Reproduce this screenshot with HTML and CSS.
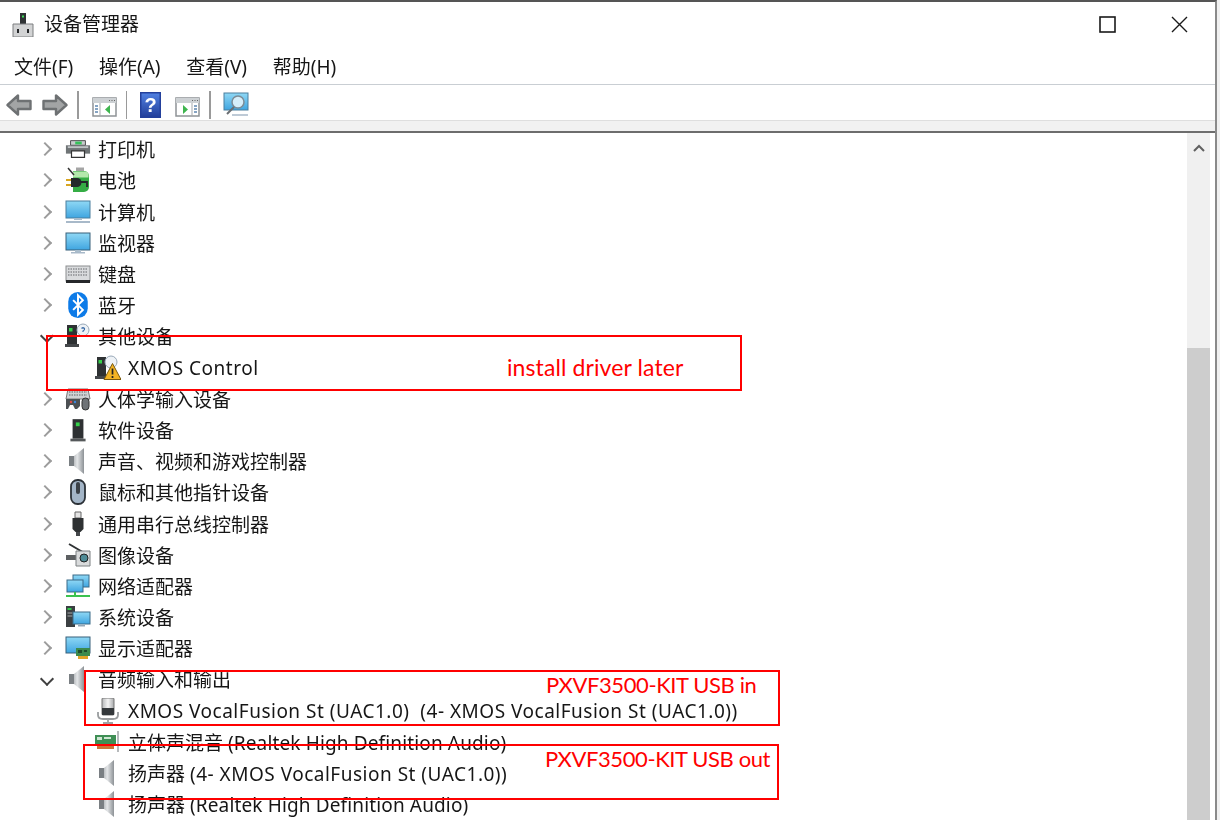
FILE: index.html
```html
<!DOCTYPE html>
<html>
<head>
  <meta charset="utf-8">
  <title>设备管理器</title>
  <link rel="stylesheet" href="styles.css">
</head>
<body>
  <svg class="defs" width="0" height="0">
    <defs>
      <linearGradient id="screen" x1="0" y1="0" x2="0" y2="1"><stop offset="0" stop-color="#8fd8f5"/><stop offset="1" stop-color="#3fa5e0"/></linearGradient>
      <linearGradient id="speaker" x1="0" y1="0" x2="1" y2="0"><stop offset="0" stop-color="#7b8084"/><stop offset="0.55" stop-color="#e4e6e8"/><stop offset="1" stop-color="#8d9296"/></linearGradient>
      <linearGradient id="mic" x1="0" y1="0" x2="1" y2="0"><stop offset="0" stop-color="#b5b7b9"/><stop offset="0.5" stop-color="#f4f4f4"/><stop offset="1" stop-color="#a8aaac"/></linearGradient>
      <linearGradient id="helpfill" x1="0" y1="0" x2="0" y2="1"><stop offset="0" stop-color="#4f7fe0"/><stop offset="1" stop-color="#23409c"/></linearGradient>
      <symbol id="i-tower" viewBox="0 0 24 24"><path d="M7 2h10v18H7z" fill="#2e3133"/><rect x="10" y="5" width="3.500" height="3.500" fill="#35d04a"/><path d="M5 20h14v2.500H5z" fill="#55585a"/></symbol>
      <symbol id="i-printer" viewBox="0 0 28 24"><path d="M6 3h16v5H6z" fill="#c8ccce" stroke="#444"/><path d="M11 4h7v3h-7z" fill="#36c35a"/><path d="M1 8h26v9H1z" fill="#6f7476"/><path d="M3 9h22v2H3z" fill="#c0c4c6"/><path d="M7 14h14v7H7z" fill="#fff" stroke="#333" stroke-width="1.300"/></symbol>
      <symbol id="i-battery" viewBox="0 0 26 26"><path d="M8 4h11a5 5 0 0 1 5 5v11a5 5 0 0 1-5 5H8z" fill="#35ad45"/><path d="M11 0.500h8v3.500h-8z" fill="#a5a5a5"/><path d="M8 4.500h13a3 3 0 0 1 2.500 3v3H8z" fill="#b4e8ac"/><path d="M3 1l6 7" stroke="#333" stroke-width="1.500"/><path d="M6 11h6a4.500 4.500 0 0 1 0 9H6z" fill="#24292b"/><path d="M1 13h5M1 18h5" stroke="#d8a520" stroke-width="2"/><path d="M16 15h6v5" fill="none" stroke="#24292b" stroke-width="1.800"/></symbol>
      <symbol id="i-pc" viewBox="0 0 26 24"><rect x="1" y="1" width="24" height="17" fill="url(#screen)" stroke="#4a7f9e"/><path d="M9 18h8v2H9z" fill="#a9bccb"/><path d="M1 21h24v2H1z" fill="#a8b9c9"/></symbol>
      <symbol id="i-monitor" viewBox="0 0 26 24"><rect x="1" y="2" width="24" height="17" fill="url(#screen)" stroke="#38617a"/><path d="M10 19h6v2h-6z" fill="#a9bccb"/><path d="M6 21h14v1.500H6z" fill="#a8b9c9"/></symbol>
      <symbol id="i-keyboard" viewBox="0 0 26 24"><rect x="1" y="4" width="24" height="15" fill="#d9dbdd" stroke="#8b8e90"/><path d="M3 7h20M3 10h20M3 13h20" stroke="#8a8d90" stroke-width="1.500" stroke-dasharray="1.500 1"/><path d="M1 18h24v3H1z" fill="#26282a"/></symbol>
      <symbol id="i-bluetooth" viewBox="0 0 24 24"><rect x="3" y="0" width="18" height="24" rx="9" fill="#0d7be8"/><path d="M7.500 7.500l9 9-4.500 4.500V3l4.500 4.500-9 9" fill="none" stroke="#fff" stroke-width="1.800"/></symbol>
      <symbol id="i-unknown" viewBox="0 0 26 24"><path d="M2 1h10v19H2z" fill="#2e3133"/><rect x="4" y="4" width="3.500" height="3.500" fill="#35d04a"/><path d="M0 20h14v3H0z" fill="#44474a"/><circle cx="18" cy="6" r="6" fill="#eef2f6" stroke="#98a8b8"/><path d="M16.500 4.500q1.500-1.500 3 0q.5 1.500-1.500 2.500v1" fill="none" stroke="#3f6ea8" stroke-width="1.200"/></symbol>
      <symbol id="i-warn" viewBox="0 0 26 24"><path d="M2 1h9v19H2z" fill="#2e3133"/><rect x="3.500" y="4" width="3.500" height="3.500" fill="#35d04a"/><path d="M0 20h11v3H0z" fill="#44474a"/><circle cx="16" cy="6" r="6" fill="#eef2f6" stroke="#98a8b8"/><path d="M17.500 7.500l8.500 16H9z" fill="#f3b324" stroke="#7a5a10"/><path d="M17.500 12.500v6M17.500 20v2" stroke="#222" stroke-width="1.700"/></symbol>
      <symbol id="i-hid" viewBox="0 0 26 24"><path d="M3 2h20l2 10H1z" fill="#cfd2d4" stroke="#777"/><path d="M4 5h18M4 8h18" stroke="#85888a" stroke-dasharray="1.500 1" stroke-width="1.500"/><path d="M1 12h14v7l-3 3h-2l-2-4H5l-2 4H1z" fill="#4c5053"/><circle cx="6" cy="15" r="1.200" fill="#e04848"/><circle cx="10" cy="15" r="1.200" fill="#3b86e0"/><rect x="17" y="11" width="7" height="12" rx="3.500" fill="#6f7377" stroke="#333"/></symbol>
      <symbol id="i-speaker" viewBox="0 0 24 26"><path d="M3 8h5l10-8v26l-10-8H3z" fill="url(#speaker)"/><path d="M3 8h5v10H3z" fill="#7a7f83"/></symbol>
      <symbol id="i-mouse" viewBox="0 0 24 26"><rect x="5" y="1" width="14" height="24" rx="6.500" fill="#a3b5c7" stroke="#2c3238" stroke-width="1.800"/><rect x="10" y="3" width="4" height="12" rx="2" fill="#3a4046"/></symbol>
      <symbol id="i-usb" viewBox="0 0 24 26"><path d="M9 1h6v6H9z" fill="#e4e4e4" stroke="#666"/><path d="M6.500 7h11v11l-3 3h-5l-3-3z" fill="#2e3133"/><path d="M10 21h4v4h-4z" fill="#44474a"/></symbol>
      <symbol id="i-camera" viewBox="0 0 26 24"><path d="M4 1l17 10" stroke="#2f3234" stroke-width="2"/><path d="M1 12h10v5H1z" fill="#5d6062"/><path d="M11 8h14v15H11z" fill="#d9dbdc" stroke="#7d8082"/><circle cx="19" cy="15" r="4" fill="#4f8b96" stroke="#222"/></symbol>
      <symbol id="i-net" viewBox="0 0 26 24"><rect x="8" y="1" width="16" height="12" fill="url(#screen)" stroke="#3b6b88"/><rect x="2" y="6" width="16" height="12" fill="url(#screen)" stroke="#3b6b88"/><path d="M10 18v3M1 22h24" stroke="#3cc24f" stroke-width="2"/></symbol>
      <symbol id="i-system" viewBox="0 0 26 24"><path d="M1 1h9v21H1z" fill="#3b3f42"/><rect x="2.500" y="3" width="4" height="2" fill="#34c94c"/><path d="M2.500 8h5M2.500 11h5" stroke="#a5a8aa"/><rect x="8" y="7" width="17" height="12" fill="url(#screen)" stroke="#3b6b88"/><path d="M13 20h7v1.500h-7z" fill="#97a8b6"/></symbol>
      <symbol id="i-display" viewBox="0 0 26 24"><rect x="1" y="1" width="24" height="16" fill="url(#screen)" stroke="#38617a"/><path d="M11 12h14v8H11z" fill="#3c8a4c"/><path d="M13 14h4v3h-4zM19 14h3v2h-3z" fill="#1e4d2b"/><path d="M13 20h10v3H13z" fill="#e0a428"/></symbol>
      <symbol id="i-mic" viewBox="0 0 24 26"><rect x="6" y="0" width="12" height="17" rx="1" fill="url(#mic)" stroke="#777"/><path d="M6 10h12v7H6z" fill="#34383b"/><path d="M2 14v3q0 4 5 4h10q5 0 5-4v-3" fill="none" stroke="#9a9d9f" stroke-width="1.800"/><path d="M12 21v4M7 25h10" stroke="#a0a3a5" stroke-width="1.800"/></symbol>
      <symbol id="i-card" viewBox="0 0 26 24"><path d="M0 5h21v10H0z" fill="#3f8f55"/><path d="M2 7h5v3H2zM9 7h7v2H9z" fill="#cfe6d3"/><path d="M2 15h17v4H2z" fill="#c9763a"/><path d="M23 1v21" stroke="#b7babc" stroke-width="2"/></symbol>
    </defs>
  </svg>

  <div class="window">
    <div class="titlebar">
      <svg class="app-icon" viewBox="0 0 22 24"><path d="M8 0h6v11H8z" fill="#2f3234"/><rect x="10" y="2.500" width="2" height="2" fill="#3fe05a"/><path d="M1 11h20v13H1z" fill="#d2d3d4" stroke="#7c7e80"/><path d="M5 16h2v4H5zM15 16h2v4h-2z" fill="#26282a"/></svg>
      <span class="title">设备管理器</span>
      <div class="win-btns">
        <svg class="win-btn" viewBox="0 0 17 17"><rect x="1" y="1" width="15" height="15" fill="none" stroke="#1a1a1a" stroke-width="1.600"/></svg>
        <svg class="win-btn close" viewBox="0 0 17 17"><path d="M1 1l15 15M16 1L1 16" stroke="#1a1a1a" stroke-width="1.400"/></svg>
      </div>
    </div>

    <div class="menubar">
      <span>文件(F)</span>
      <span>操作(A)</span>
      <span>查看(V)</span>
      <span>帮助(H)</span>
    </div>

    <div class="toolbar">
      <svg class="tool arrow" viewBox="0 0 26 24"><path d="M1.500 12L12 2.500V8h12.500v8H12v5.500z" fill="#a2a4a5" stroke="#6e7173" stroke-width="2.400" stroke-linejoin="round"/></svg>
      <svg class="tool arrow next" viewBox="0 0 26 24"><path d="M24.500 12L14 2.500V8H1.500v8H14v5.500z" fill="#a2a4a5" stroke="#6e7173" stroke-width="2.400" stroke-linejoin="round"/></svg>
      <i class="sep"></i>
      <svg class="tool pane" viewBox="0 0 25 20"><rect x="1" y="1" width="23" height="18" fill="#fff" stroke="#8e9396" stroke-width="1.500"/><path d="M1 1h23v5H1z" fill="#cdd1d4"/><path d="M17 3.500h1M19.500 3.500h1M22 3.500h1" stroke="#666"/><path d="M8 6v13" stroke="#a5a9ac"/><path d="M3 9h3M3 12h3M3 15h3" stroke="#5f86b0" stroke-width="1.500"/><path d="M18 8v9l-5-4.500z" fill="#3fb54f"/></svg>
      <i class="sep"></i>
      <svg class="tool help" viewBox="0 0 21 26"><rect width="21" height="26" fill="#23409c"/><rect x="1.500" y="1.500" width="18" height="23" fill="url(#helpfill)"/><text x="10.500" y="20" text-anchor="middle" class="help-mark">?</text></svg>
      <svg class="tool pane" viewBox="0 0 25 20"><rect x="1" y="1" width="23" height="18" fill="#fff" stroke="#8e9396" stroke-width="1.500"/><path d="M1 1h23v5H1z" fill="#cdd1d4"/><path d="M17 3.500h1M19.500 3.500h1M22 3.500h1" stroke="#666"/><path d="M17 6v13" stroke="#a5a9ac"/><path d="M19 9h3M19 12h3M19 15h3" stroke="#5f86b0" stroke-width="1.500"/><path d="M8 8v9l5-4.500z" fill="#3fb54f"/></svg>
      <i class="sep"></i>
      <svg class="tool scan" viewBox="0 0 26 25"><rect x="1" y="1" width="24" height="17" fill="url(#screen)" stroke="#4a7f9e"/><circle cx="15" cy="10" r="6" fill="#d5eefa" stroke="#7c8c96" stroke-width="1.500"/><path d="M11 15l-7 7" stroke="#6a6e72" stroke-width="2"/><path d="M9 23h16" stroke="#a8b9c9" stroke-width="1.500"/></svg>
    </div>

    <div class="band"></div>

    <div class="content">
      <ul class="tree">
        <li class="row"><i class="chev"></i><svg class="icon"><use href="#i-printer"/></svg><span>打印机</span></li>
        <li class="row"><i class="chev"></i><svg class="icon"><use href="#i-battery"/></svg><span>电池</span></li>
        <li class="row"><i class="chev"></i><svg class="icon"><use href="#i-pc"/></svg><span>计算机</span></li>
        <li class="row"><i class="chev"></i><svg class="icon"><use href="#i-monitor"/></svg><span>监视器</span></li>
        <li class="row"><i class="chev"></i><svg class="icon"><use href="#i-keyboard"/></svg><span>键盘</span></li>
        <li class="row"><i class="chev"></i><svg class="icon"><use href="#i-bluetooth"/></svg><span>蓝牙</span></li>
        <li class="row"><i class="chev open"></i><svg class="icon"><use href="#i-unknown"/></svg><span>其他设备</span></li>
        <li class="row child"><svg class="icon"><use href="#i-warn"/></svg><span class="xmos">XMOS Control</span></li>
        <li class="row"><i class="chev"></i><svg class="icon"><use href="#i-hid"/></svg><span>人体学输入设备</span></li>
        <li class="row"><i class="chev"></i><svg class="icon"><use href="#i-tower"/></svg><span>软件设备</span></li>
        <li class="row"><i class="chev"></i><svg class="icon"><use href="#i-speaker"/></svg><span>声音、视频和游戏控制器</span></li>
        <li class="row"><i class="chev"></i><svg class="icon"><use href="#i-mouse"/></svg><span>鼠标和其他指针设备</span></li>
        <li class="row"><i class="chev"></i><svg class="icon"><use href="#i-usb"/></svg><span>通用串行总线控制器</span></li>
        <li class="row"><i class="chev"></i><svg class="icon"><use href="#i-camera"/></svg><span>图像设备</span></li>
        <li class="row"><i class="chev"></i><svg class="icon"><use href="#i-net"/></svg><span>网络适配器</span></li>
        <li class="row"><i class="chev"></i><svg class="icon"><use href="#i-system"/></svg><span>系统设备</span></li>
        <li class="row"><i class="chev"></i><svg class="icon"><use href="#i-display"/></svg><span>显示适配器</span></li>
        <li class="row"><i class="chev open"></i><svg class="icon"><use href="#i-speaker"/></svg><span>音频输入和输出</span></li>
        <li class="row child"><svg class="icon"><use href="#i-mic"/></svg><span class="xmos">XMOS VocalFusion St (UAC1.0)&nbsp; (4- XMOS VocalFusion St (UAC1.0))</span></li>
        <li class="row child"><svg class="icon"><use href="#i-card"/></svg><span>立体声混音 <span class="realtek">(Realtek High Definition Audio)</span></span></li>
        <li class="row child"><svg class="icon"><use href="#i-speaker"/></svg><span>扬声器 <span class="xmos">(4- XMOS VocalFusion St (UAC1.0))</span></span></li>
        <li class="row child"><svg class="icon"><use href="#i-speaker"/></svg><span>扬声器 <span class="realtek">(Realtek High Definition Audio)</span></span></li>
      </ul>
      <div class="scrollbar">
        <div class="scroll-up"><svg viewBox="0 0 12 8"><path d="M1 7l5-5 5 5" fill="none" stroke="#606060" stroke-width="2"/></svg></div>
        <div class="scroll-thumb"></div>
      </div>
    </div>
  </div>

  <!-- red notes drawn over the window -->
  <div class="note box-driver"><span>install driver later</span></div>
  <div class="note box-in"><span>PXVF3500-KIT USB in</span></div>
  <div class="note box-out"><span>PXVF3500-KIT USB out</span></div>
</body>
</html>
```

FILE: styles.css
```css
html, body {
  margin: 0;
  padding: 0;
  height: 100%;
  overflow: hidden;
  background-color: #f0f0f0;
}

body {
  font-family: "Noto Sans", "Noto Sans CJK SC", sans-serif;
  color: #161616;
  font-size: 19px;
}

.defs {
  display: block;
  height: 0;
}

.window {
  width: 1217px;
  height: 820px;
  background-color: #FFFFFF;
  border-top: 2px solid #555;
  border-right: 2px solid #8a8a8a;
  box-sizing: border-box;
  display: flex;
  flex-direction: column;
  filter: blur(0.35px);
}

.titlebar {
  height: 45px;
  display: flex;
  align-items: center;
  padding-left: 12px;
  flex: none;
}

.app-icon {
  width: 22px;
  height: 24px;
}

.title {
  margin-left: 10px;
  line-height: 1;
}

.win-btns {
  margin-left: auto;
  margin-right: 27px;
  display: flex;
  gap: 55px;
}

.win-btn {
  width: 17px;
  height: 17px;
}

.menubar {
  height: 37px;
  display: flex;
  align-items: center;
  gap: 25.7px;
  padding-left: 14px;
  border-bottom: 1px solid #c9ced3;
  flex: none;
}

.toolbar {
  height: 31px;
  padding-top: 4px;
  display: flex;
  align-items: center;
  padding-left: 6px;
  flex: none;
}

.tool {
  flex: none;
}

.arrow {
  width: 26px;
  height: 24px;
}

.arrow.next {
  margin-left: 10px;
}

.sep {
  width: 1.5px;
  height: 28px;
  background-color: #9a9a9a;
  margin: 0 13px 0 9px;
}

.pane {
  width: 25px;
  height: 20px;
  margin-top: 5px;
}

.help {
  width: 21px;
  height: 26px;
  margin-right: 14px;
}

.help-mark {
  font-family: "Liberation Sans", sans-serif;
  font-size: 20px;
  font-weight: bold;
  fill: #FFFFFF;
}

.scan {
  width: 26px;
  height: 25px;
  margin-left: -1px;
}

.band {
  height: 10px;
  background-color: #f1f1f1;
  border-top: 1px solid #dedede;
  border-bottom: 2px solid #6d6d6d;
  flex: none;
}

.content {
  flex: 1;
  display: flex;
  min-height: 0;
  overflow: hidden;
}

.tree {
  flex: 1;
  list-style-type: none;
  margin: 0;
  padding: 0.7px 0 0 40px;
  min-width: 0;
}

.row {
  height: 31.2px;
  display: flex;
  align-items: center;
  white-space: nowrap;
}

.row.child {
  padding-left: 30px;
}

.row.child .icon {
  margin-left: 25px;
}

.xmos {
  letter-spacing: 0.5px;
}

.realtek {
  letter-spacing: 0.14px;
}

.chev {
  width: 8px;
  height: 8px;
  border-top: 2px solid #9c9c9c;
  border-right: 2px solid #9c9c9c;
  transform: rotate(45deg);
  margin-right: 15px;
  flex: none;
}

.chev.open {
  border-color: #404040;
  transform: translateX(2px) rotate(135deg);
}

.icon {
  width: 26px;
  height: 26px;
  margin-right: 7px;
  flex: none;
}

.scrollbar {
  width: 23px;
  margin-right: 5px;
  background-color: #f0f0f0;
  display: flex;
  flex-direction: column;
  flex: none;
}

.scroll-up {
  height: 30px;
  display: flex;
  align-items: center;
  justify-content: center;
}

.scroll-up svg {
  width: 12px;
  height: 8px;
}

.scroll-thumb {
  margin-top: 185px;
  flex: 1;
  background-color: #cdcdcd;
}

.note {
  position: absolute;
  box-sizing: border-box;
  width: 696px;
  height: 56px;
  border: 2px solid #ff0000;
  color: #ff0000;
  font-family: Lato, sans-serif;
  font-size: 22px;
  letter-spacing: -0.4px;
  line-height: 1;
}

.note span {
  position: absolute;
  white-space: nowrap;
}

.box-driver {
  left: 46px;
  top: 335px;
  font-size: 23px;
  letter-spacing: 0.1px;
}

.box-driver span {
  left: 459px;
  top: 19px;
}

.box-in {
  left: 84px;
  top: 670px;
}

.box-in span {
  left: 460px;
  top: 2px;
}

.box-out {
  left: 83px;
  top: 744px;
}

.box-out span {
  left: 460px;
  top: 2px;
}
```
